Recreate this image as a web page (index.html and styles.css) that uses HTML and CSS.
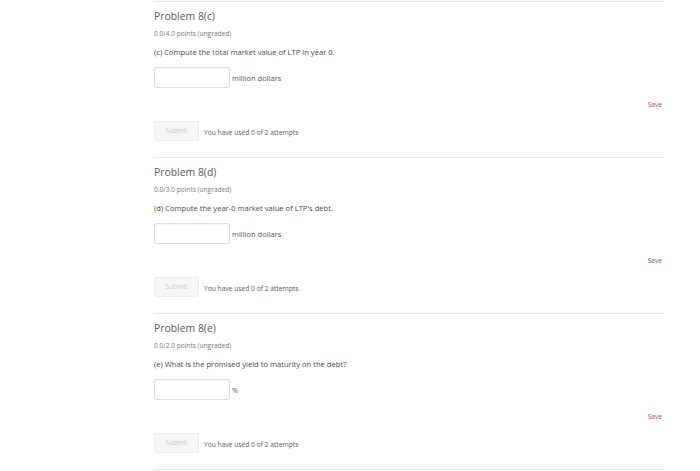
FILE: index.html
```html
<!DOCTYPE html>
<html>
<head>
<meta charset="utf-8">
<link rel="stylesheet" href="styles.css">
</head>
<body>
<div class="page">
  <section class="problem">
    <h3 class="title">Problem 8(c)</h3>
    <div class="points">0.0/4.0 points (ungraded)</div>
    <p class="question">(c) Compute the total market value of LTP in year 0.</p>
    <div class="answer"><span class="input"></span><span class="unit">million dollars</span></div>
    <div class="save-row"><span class="save">Save</span></div>
    <div class="submit-row"><span class="submit">Submit</span><span class="attempts">You have used 0 of 2 attempts</span></div>
  </section>
  <section class="problem">
    <h3 class="title">Problem 8(d)</h3>
    <div class="points">0.0/3.0 points (ungraded)</div>
    <p class="question">(d) Compute the year-0 market value of LTP's debt.</p>
    <div class="answer"><span class="input"></span><span class="unit">million dollars</span></div>
    <div class="save-row"><span class="save">Save</span></div>
    <div class="submit-row"><span class="submit">Submit</span><span class="attempts">You have used 0 of 2 attempts</span></div>
  </section>
  <section class="problem">
    <h3 class="title">Problem 8(e)</h3>
    <div class="points">0.0/2.0 points (ungraded)</div>
    <p class="question">(e) What is the promised yield to maturity on the debt?</p>
    <div class="answer"><span class="input"></span><span class="unit">%</span></div>
    <div class="save-row"><span class="save">Save</span></div>
    <div class="submit-row"><span class="submit">Submit</span><span class="attempts">You have used 0 of 2 attempts</span></div>
  </section>
  <section class="problem"></section>
</div>
</body>
</html>
```
FILE: styles.css
```css
html, body {
  margin: 0;
  padding: 0;
  background: #fff;
}
body {
  font-family: "Open Sans", "Noto Sans", sans-serif;
  color: #444;
}
.page {
  margin-left: 154px;
  width: 510px;
  padding-top: 1px;
}
.problem {
  border-top: 1px solid #e6e6e6;
  display: flex;
  flex-direction: column;
  padding-bottom: 16px;
}
.title {
  margin: 7px 0 0;
  font-size: 10.4px;
  line-height: 14px;
  font-weight: 400;
  color: #5a5a5a;
}
.points {
  margin-top: 6px;
  font-size: 6.6px;
  line-height: 10px;
  color: #7a7a7a;
}
.question {
  margin: 8px 0 0;
  font-size: 7.6px;
  line-height: 10px;
  color: #4a4a4a;
}
.answer {
  margin-top: 10px;
  display: flex;
  align-items: center;
  gap: 2px;
  height: 21px;
}
.input {
  display: block;
  box-sizing: border-box;
  width: 76px;
  height: 21px;
  border: 1px solid #dcdcdc;
  border-radius: 2px;
  box-shadow: inset 0 1px 1px rgba(0,0,0,0.04);
  background: #fff;
}
.unit {
  font-size: 7.5px;
  color: #555;
}
.save-row {
  margin-top: 12px;
  display: flex;
  justify-content: flex-end;
  padding-right: 2px;
  line-height: 10px;
}
.save {
  font-size: 6.6px;
  color: #a8475a;
}
.submit-row {
  margin-top: 11px;
  display: flex;
  align-items: center;
  gap: 5px;
}
.submit {
  display: block;
  box-sizing: border-box;
  width: 45px;
  height: 20px;
  line-height: 18px;
  border: 1px solid #ececec;
  border-radius: 2px;
  background: #f6f6f6;
  color: #c6c6c6;
  font-size: 6.6px;
  text-align: center;
}
.attempts {
  font-size: 6.7px;
  color: #5a5a5a;
  margin-top: 3px;
}
```
